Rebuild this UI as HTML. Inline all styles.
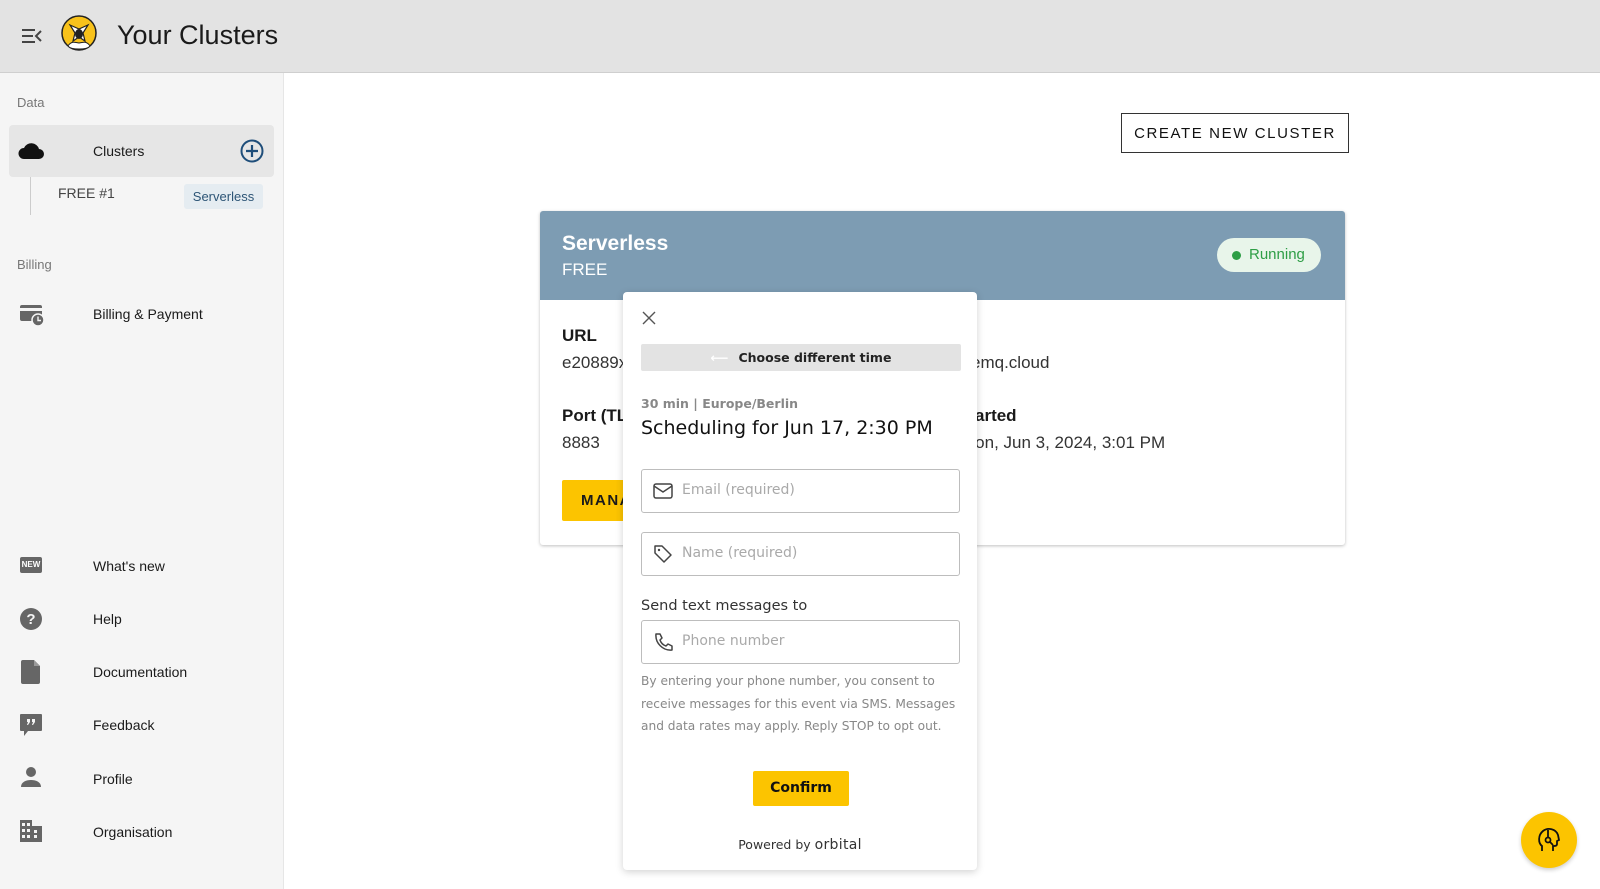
<!DOCTYPE html>
<html><head><meta charset="utf-8"><style>
*{box-sizing:border-box;margin:0;padding:0}
body{width:1600px;height:889px;overflow:hidden;background:#fff;font-family:"Liberation Sans",sans-serif;position:relative;color:#1a1a1a}
.a{position:absolute}
.hdr{left:0;top:0;width:1600px;height:73px;background:#e3e3e3;border-bottom:1px solid #cfcfcf}
.side{left:0;top:73px;width:284px;height:816px;background:#f5f5f5;border-right:1px solid #e6e6e6}
.lbl{font-size:13px;color:#777}
.it{font-size:14px;color:#1a1a1a;left:93px}
.mod{font-family:"DejaVu Sans","Liberation Sans",sans-serif}
.inp{left:641px;width:319px;height:44px;border:1px solid #bdbdbd;border-radius:3px;background:#fff}
.ph{position:absolute;left:40px;top:12px;font-size:14px;color:#a9a9a9}
</style></head><body>
<div class="a hdr"></div>
<svg class="a" style="left:21px;top:27px" width="22" height="18" viewBox="0 0 22 18"><path d="M1 3h13M1 9h11M1 15h13M20 4l-5 5 5 5" stroke="#444" stroke-width="2" fill="none"/></svg>
<svg class="a" style="left:60px;top:15px" width="38" height="38" viewBox="0 0 38 38"><circle cx="19" cy="18" r="17" fill="#f8c21b" stroke="#222" stroke-width="1.5"/><path d="M10 10l9 4 9-4-5 8 2 8-6-4-6 4 2-8z" fill="#fff" stroke="#222" stroke-width="1.2"/><ellipse cx="19" cy="19" rx="4" ry="5" fill="#222"/><path d="M8 31c3-5 7-4 11-3 4-1 8-2 11 3-3 4-19 4-22 0z" fill="#fff" stroke="#222" stroke-width="1"/></svg>
<div class="a" style="left:117px;top:20px;font-size:27px;color:#1a1a1a">Your Clusters</div>

<div class="a side"></div>
<div class="a lbl" style="left:17px;top:95px">Data</div>
<div class="a" style="left:9px;top:125px;width:265px;height:52px;background:#e6e6e6;border-radius:4px"></div>
<svg class="a" style="left:18px;top:140px" width="26" height="20" viewBox="0 0 26 20"><path d="M6 19h15a5 5 0 0 0 0-10 8 8 0 0 0-15-1 5.5 5.5 0 0 0 0 11z" fill="#111"/></svg>
<div class="a it" style="top:143px">Clusters</div>
<svg class="a" style="left:240px;top:139px" width="24" height="24" viewBox="0 0 24 24"><circle cx="12" cy="12" r="10.5" fill="none" stroke="#1f4e7a" stroke-width="2"/><path d="M12 6v12M6 12h12" stroke="#1f4e7a" stroke-width="2.2"/></svg>
<div class="a" style="left:30px;top:177px;width:1px;height:38px;background:#ccc"></div>
<div class="a" style="left:58px;top:185px;font-size:14px;color:#444">FREE #1</div>
<div class="a" style="left:184px;top:184px;width:79px;height:25px;background:#e5ecf1;border-radius:3px;font-size:13px;color:#2d5576;text-align:center;line-height:25px">Serverless</div>
<div class="a lbl" style="left:17px;top:257px">Billing</div>
<svg class="a" style="left:19px;top:303px" width="26" height="24" viewBox="0 0 26 24"><rect x="1" y="2" width="22" height="16" rx="2" fill="#666"/><rect x="1" y="5" width="22" height="3" fill="#f5f5f5"/><circle cx="19" cy="17" r="6" fill="#666" stroke="#f5f5f5" stroke-width="1.5"/><path d="M19 13.5v4h3" stroke="#f5f5f5" stroke-width="1.4" fill="none"/></svg>
<div class="a it" style="top:306px">Billing &amp; Payment</div>

<div class="a" style="left:20px;top:557px;width:22px;height:16px;background:#666;border-radius:2px;color:#fff;font-size:8px;font-weight:bold;text-align:center;line-height:16px">NEW</div>
<div class="a it" style="top:558px">What's new</div>
<svg class="a" style="left:19px;top:607px" width="24" height="24" viewBox="0 0 24 24"><circle cx="12" cy="12" r="11" fill="#666"/><text x="12" y="17" text-anchor="middle" font-size="15" font-weight="bold" fill="#f5f5f5" font-family="Liberation Sans">?</text></svg>
<div class="a it" style="top:611px">Help</div>
<svg class="a" style="left:21px;top:660px" width="20" height="24" viewBox="0 0 20 24"><path d="M2 0h11l6 6v16a2 2 0 0 1-2 2H2a2 2 0 0 1-2-2V2a2 2 0 0 1 2-2z" fill="#666"/><path d="M13 0v6h6" fill="#999"/></svg>
<div class="a it" style="top:664px">Documentation</div>
<svg class="a" style="left:19px;top:713px" width="24" height="24" viewBox="0 0 24 24"><path d="M2 1h20a1 1 0 0 1 1 1v15a1 1 0 0 1-1 1H9l-4 5v-5H2a1 1 0 0 1-1-1V2a1 1 0 0 1 1-1z" fill="#666"/><path d="M8 6h3v3l-2 3H8l1-3H8zM13 6h3v3l-2 3h-1l1-3h-1z" fill="#f5f5f5"/></svg>
<div class="a it" style="top:717px">Feedback</div>
<svg class="a" style="left:20px;top:766px" width="22" height="22" viewBox="0 0 22 22"><circle cx="11" cy="6" r="5" fill="#666"/><path d="M1 21c0-5 5-7 10-7s10 2 10 7z" fill="#666"/></svg>
<div class="a it" style="top:771px">Profile</div>
<svg class="a" style="left:20px;top:820px" width="22" height="22" viewBox="0 0 22 22"><rect x="0" y="0" width="12" height="22" fill="#666"/><rect x="12" y="6" width="10" height="16" fill="#666"/><g fill="#f5f5f5"><rect x="2" y="3" width="3" height="3"/><rect x="7" y="3" width="3" height="3"/><rect x="2" y="9" width="3" height="3"/><rect x="7" y="9" width="3" height="3"/><rect x="2" y="15" width="3" height="3"/><rect x="7" y="15" width="3" height="3"/><rect x="14" y="10" width="3" height="3"/><rect x="14" y="15" width="3" height="3"/></g></svg>
<div class="a it" style="top:824px">Organisation</div>

<div class="a" style="left:1121px;top:113px;width:228px;height:40px;border:1px solid #333;font-size:15px;letter-spacing:1.6px;text-align:center;line-height:40px;color:#111">CREATE NEW CLUSTER</div>

<div class="a" style="left:540px;top:211px;width:805px;height:334px;background:#fff;box-shadow:0 1px 3px rgba(0,0,0,.25);border-radius:3px"></div>
<div class="a" style="left:540px;top:211px;width:805px;height:89px;background:#7d9cb3;border-radius:3px 3px 0 0"></div>
<div class="a" style="left:562px;top:232px;font-size:21px;font-weight:bold;color:#fff">Serverless</div>
<div class="a" style="left:562px;top:260px;font-size:17px;color:#fff">FREE</div>
<div class="a" style="left:1217px;top:238px;width:104px;height:34px;background:#e8f5ea;border-radius:17px;font-size:15px;color:#2e9e46;line-height:34px;padding-left:32px">Running</div>
<div class="a" style="left:1232px;top:251px;width:9px;height:9px;border-radius:50%;background:#2e9e46"></div>
<div class="a" style="left:562px;top:326px;font-size:17px;font-weight:bold">URL</div>
<div class="a" style="left:562px;top:353px;font-size:17px;color:#333">e20889xxxxxxxxxxxx</div>
<div class="a" style="left:971px;top:353px;font-size:17px;color:#333">emq.cloud</div>
<div class="a" style="left:562px;top:406px;font-size:17px;font-weight:bold">Port (TLS)</div>
<div class="a" style="left:562px;top:433px;font-size:17px;color:#333">8883</div>
<div class="a" style="left:958px;top:406px;font-size:17px;font-weight:bold">Started</div>
<div class="a" style="left:961px;top:433px;font-size:17px;color:#333">Mon, Jun 3, 2024, 3:01 PM</div>
<div class="a" style="left:562px;top:480px;width:110px;height:41px;background:#fcc400;border-radius:2px;font-size:15px;font-weight:bold;letter-spacing:1.5px;line-height:41px;padding-left:19px">MANAGE</div>

<div class="a mod" style="left:623px;top:292px;width:354px;height:578px;background:#fff;border-radius:4px;box-shadow:0 2px 8px rgba(0,0,0,.18)">
 <svg class="a" style="left:19px;top:19px" width="14" height="14" viewBox="0 0 14 14"><path d="M1 1l12 12M13 1L1 13" stroke="#555" stroke-width="1.4"/></svg>
 <div class="a" style="left:18px;top:52px;width:320px;height:27px;background:#e3e3e3;border-radius:2px;font-size:12.5px;font-weight:bold;text-align:center;line-height:27px;color:#222"><span style="color:#fff;margin-right:10px">⟵</span>Choose different time</div>
 <div class="a" style="left:18px;top:104px;font-size:12.5px;font-weight:bold;color:#888">30 min | Europe/Berlin</div>
 <div class="a" style="left:18px;top:125px;font-size:19px;color:#111">Scheduling for Jun 17, 2:30 PM</div>
 <div class="a" style="left:18px;top:306px;font-size:14.5px;color:#333">Send text messages to</div>
 <div class="a" style="left:18px;top:378px;width:320px;font-size:12.2px;line-height:22.5px;color:#888">By entering your phone number, you consent to receive messages for this event via SMS. Messages and data rates may apply. Reply STOP to opt out.</div>
 <div class="a" style="left:130px;top:479px;width:96px;height:35px;background:#fcc400;border-radius:2px;font-size:14px;font-weight:bold;text-align:center;line-height:35px;color:#111">Confirm</div>
 <div class="a" style="left:0;width:354px;top:545px;text-align:center;font-size:12.5px;color:#333">Powered by <span style="font-size:14px;letter-spacing:.3px">orbital</span></div>
</div>
<div class="a inp mod" style="top:469px"><svg class="a" style="left:11px;top:13px" width="20" height="16" viewBox="0 0 20 16"><rect x="1" y="1" width="18" height="14" rx="2" fill="none" stroke="#444" stroke-width="1.5"/><path d="M1 3l9 6 9-6" fill="none" stroke="#444" stroke-width="1.5"/></svg><span class="ph">Email (required)</span></div>
<div class="a inp mod" style="top:532px"><svg class="a" style="left:11px;top:11px" width="20" height="20" viewBox="0 0 20 20"><path d="M2 2h7l9 9-7 7-9-9z" fill="none" stroke="#444" stroke-width="1.5" stroke-linejoin="round"/><circle cx="6" cy="6" r="1.2" fill="#444"/></svg><span class="ph">Name (required)</span></div>
<div class="a inp mod" style="top:620px"><svg class="a" style="left:11px;top:11px" width="20" height="20" viewBox="0 0 20 20"><path d="M3 2l4 0 2 4-2 2c1 3 3 5 6 6l2-2 4 2v4c-9 1-17-7-16-16z" fill="none" stroke="#444" stroke-width="1.5" stroke-linejoin="round"/></svg><span class="ph">Phone number</span></div>

<div class="a" style="left:1521px;top:812px;width:56px;height:56px;border-radius:50%;background:#fcc400;box-shadow:0 2px 4px rgba(0,0,0,.2)"></div>
<svg class="a" style="left:1535px;top:826px" width="28" height="28" viewBox="0 0 28 28"><path d="M7 25v-5C3 17 3 9 8 5c5-4 13-2 15 4l1 5-2 1v3c0 2-2 2-4 2v5" fill="none" stroke="#111" stroke-width="1.8"/><path d="M13 4v8" stroke="#111" stroke-width="1.8"/><circle cx="13" cy="14" r="2.5" fill="none" stroke="#111" stroke-width="1.8"/><path d="M15 16l3 3" stroke="#111" stroke-width="1.8"/></svg>
</body></html>
